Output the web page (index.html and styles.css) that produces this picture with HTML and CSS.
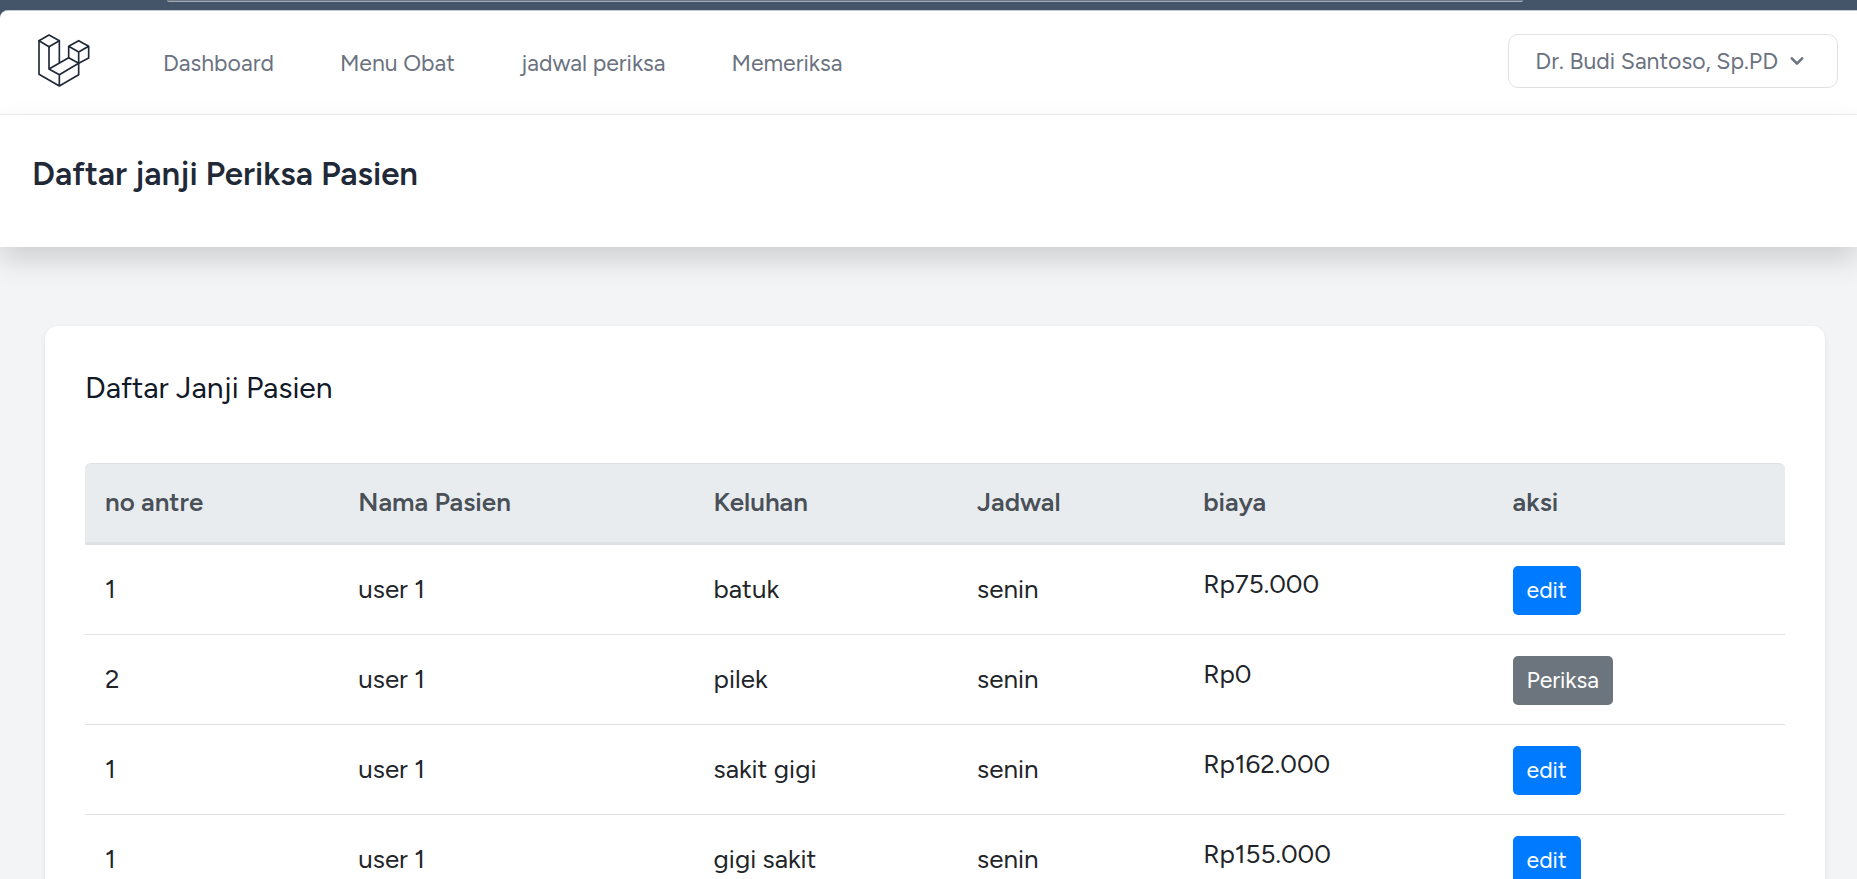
FILE: index.html
```html
<!DOCTYPE html>
<html lang="id">
<head>
<meta charset="utf-8">
<title>Daftar janji Periksa Pasien</title>
<link rel="stylesheet" href="styles.css">
</head>
<body>
<div class="browser-bar"><div class="address"></div></div>
<div class="page">
  <nav class="nav">
    <a class="logo" href="#" aria-label="Beranda">
      <svg viewBox="114 104 156 159" fill="none" stroke="#1f2937" stroke-width="5" stroke-linejoin="round" stroke-linecap="round">
        <path d="M147 107L178 124L147 142L117 124Z"/>
        <path d="M117 124V225L178 260L236 226V192M147 142V209L178 226V260M178 124V191M147 209L206 175M178 226L236 192"/>
        <path d="M236 124L266 141L236 158L206 141ZM206 141V175L236 192L266 176V141M236 158V192"/>
      </svg>
    </a>
    <div class="links">
      <a href="#">Dashboard</a>
      <a href="#">Menu Obat</a>
      <a href="#">jadwal periksa</a>
      <a href="#">Memeriksa</a>
    </div>
    <button class="user" type="button">Dr. Budi Santoso, Sp.PD
      <svg viewBox="0 0 20 20" fill="currentColor"><path fill-rule="evenodd" d="M5.293 7.293a1 1 0 011.414 0L10 10.586l3.293-3.293a1 1 0 111.414 1.414l-4 4a1 1 0 01-1.414 0l-4-4a1 1 0 010-1.414z"/></svg>
    </button>
  </nav>
  <header class="header"><h1>Daftar janji Periksa Pasien</h1></header>
  <main class="main">
    <section class="card">
      <h2>Daftar Janji Pasien</h2>
      <table class="table">
        <colgroup><col class="c-no"><col class="c-nama"><col class="c-keluhan"><col class="c-jadwal"><col class="c-biaya"><col class="c-aksi"></colgroup>
        <thead><tr><th>no antre</th><th>Nama Pasien</th><th>Keluhan</th><th>Jadwal</th><th>biaya</th><th>aksi</th></tr></thead>
        <tbody>
          <tr><td>1</td><td>user 1</td><td>batuk</td><td>senin</td><td class="fee">Rp75.000</td><td class="action"><a class="btn edit" href="#">edit</a></td></tr>
          <tr><td>2</td><td>user 1</td><td>pilek</td><td>senin</td><td class="fee">Rp0</td><td class="action"><a class="btn check" href="#">Periksa</a></td></tr>
          <tr><td>1</td><td>user 1</td><td>sakit gigi</td><td>senin</td><td class="fee">Rp162.000</td><td class="action"><a class="btn edit" href="#">edit</a></td></tr>
          <tr><td>1</td><td>user 1</td><td>gigi sakit</td><td>senin</td><td class="fee">Rp155.000</td><td class="action"><a class="btn edit" href="#">edit</a></td></tr>
        </tbody>
      </table>
    </section>
  </main>
</div>
</body>
</html>
```
FILE: styles.css
```css
* { box-sizing: border-box; }
html { height: 100%; }
body {
  margin: 0;
  height: 100%;
  overflow: hidden;
  display: flex;
  flex-direction: column;
  background: #455569;
  color: #212529;
  font-family: Figtree, Lato, "Open Sans", sans-serif;
  font-size: 26px;
  line-height: 40px;
}
a { color: inherit; text-decoration: none; }
h1, h2 { margin: 0; }

.browser-bar { height: 10px; padding: 0 18% 0 9%; flex: none; }
.address {
  height: 2px;
  background: #6c7787;
  border-bottom: 1px solid #a3abb5;
  border-radius: 0 0 8px 8px;
}

.page {
  flex: 1;
  min-height: 0;
  overflow: hidden;
  background: #f3f4f6;
  border-top: 1px solid #c3c8ce;
  border-top-left-radius: 8px;
}

.nav {
  display: flex;
  align-items: center;
  height: 104px;
  padding: 0 19px 4px 38px;
  background: #fff;
  border-bottom: 1px solid #eceef0;
  font-size: 23px;
  color: #6b7280;
}
.logo { display: flex; }
.logo svg { width: 52px; height: 53px; }
.links { display: flex; gap: 66px; padding: 4px 0 0 73px; }
.user {
  display: flex;
  align-items: center;
  gap: 6px;
  margin-left: auto;
  height: 54px;
  padding: 0 27px 0 26px;
  background: #fff;
  border: 1px solid #e0e2e5;
  border-radius: 10px;
  font: inherit;
  color: inherit;
}
.user svg { width: 26px; height: 26px; }

.header {
  position: relative;
  padding: 39px 32px 53px;
  background: #fff;
  box-shadow: 0 13px 26px rgba(0, 0, 0, 0.15);
}
.header h1 { font-size: 33px; font-weight: 600; color: #1f2937; }

.main { padding: 79px 32px 0 45px; }
.card {
  padding: 40px 40px 60px;
  background: #fff;
  border-radius: 13px;
  box-shadow: 0 2px 5px rgba(0, 0, 0, 0.08);
}
.card h2 { font-size: 30px; font-weight: 400; color: #111827; line-height: 44px; margin-bottom: 53px; }

.table {
  width: 100%;
  table-layout: fixed;
  border-collapse: separate;
  border-spacing: 0;
}
.c-no { width: 14.9%; }
.c-nama { width: 20.9%; }
.c-keluhan { width: 15.5%; }
.c-jadwal { width: 13.3%; }
.c-biaya { width: 18.2%; }
.c-aksi { width: 17.2%; }
.table th {
  height: 82px;
  padding: 0 20px 2px;
  background: #e9ecef;
  border-top: 1px solid #dee2e6;
  border-bottom: 3px solid #dee2e6;
  color: #495057;
  font-weight: 600;
  text-align: left;
}
.table th:first-child { border-top-left-radius: 6px; }
.table th:last-child { border-top-right-radius: 6px; }
.table td {
  height: 90px;
  padding: 19px 20px 21px;
  line-height: 36px;
  border-bottom: 1px solid #dee2e6;
  vertical-align: middle;
}
.table td.fee { padding-top: 21px; vertical-align: top; }
.table td.action { padding-top: 21px; padding-bottom: 19px; }
.btn {
  display: block;
  width: fit-content;
  padding: 7px 14px;
  border-radius: 5px;
  font-size: 23px;
  line-height: 35px;
  color: #fff;
}
.edit { background: #007bff; }
.check { background: #6c757d; }
```
